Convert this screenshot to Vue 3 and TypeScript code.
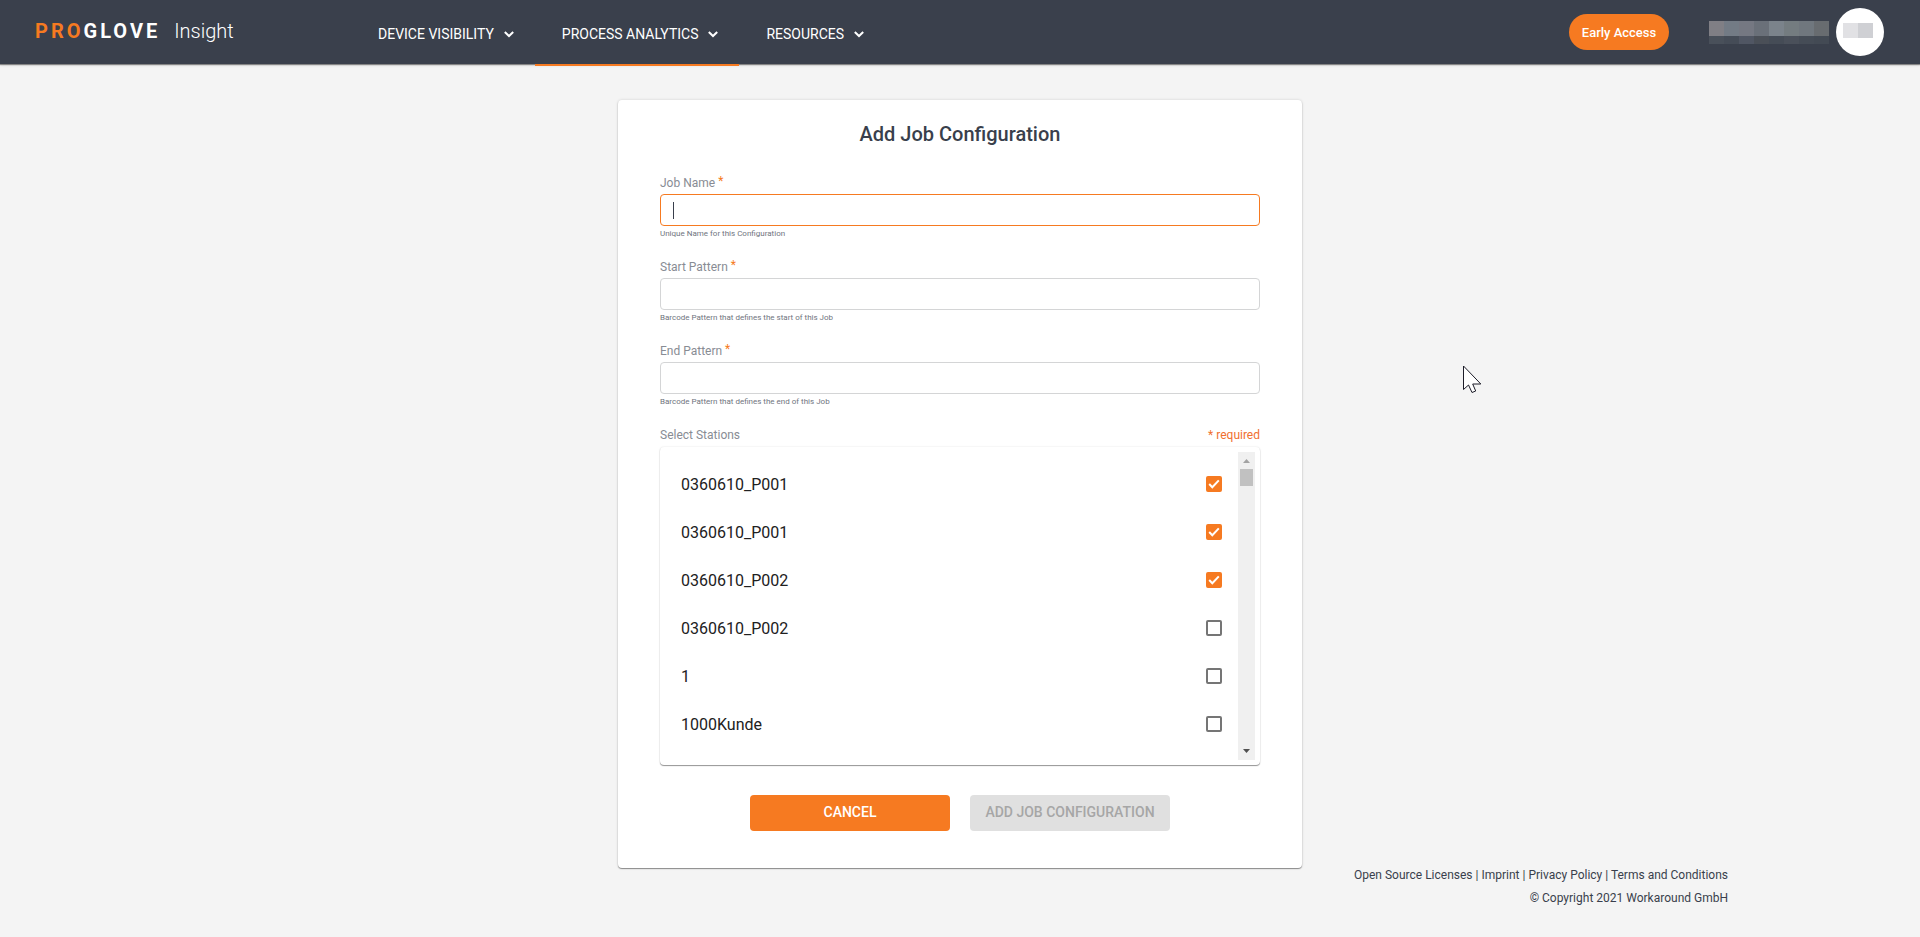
<script setup lang="ts">
import { ref } from 'vue'

interface NavItem { label: string; active: boolean }
interface Field { id: string; label: string; hint: string; value: string; focused: boolean }
interface Station { id: number; name: string; selected: boolean }

const navItems: NavItem[] = [
  { label: 'DEVICE VISIBILITY', active: false },
  { label: 'PROCESS ANALYTICS', active: true },
  { label: 'RESOURCES', active: false },
]

const fields = ref<Field[]>([
  { id: 'job-name', label: 'Job Name', hint: 'Unique Name for this Configuration', value: '', focused: true },
  { id: 'start-pattern', label: 'Start Pattern', hint: 'Barcode Pattern that defines the start of this Job', value: '', focused: false },
  { id: 'end-pattern', label: 'End Pattern', hint: 'Barcode Pattern that defines the end of this Job', value: '', focused: false },
])

const stations = ref<Station[]>([
  { id: 1, name: '0360610_P001', selected: true },
  { id: 2, name: '0360610_P001', selected: true },
  { id: 3, name: '0360610_P002', selected: true },
  { id: 4, name: '0360610_P002', selected: false },
  { id: 5, name: '1', selected: false },
  { id: 6, name: '1000Kunde', selected: false },
])

const footerLinks: string[] = ['Open Source Licenses', 'Imprint', 'Privacy Policy', 'Terms and Conditions']

const maskTop: string[] = ['#807f85', '#737b85', '#757882', '#6a7079', '#7b838b', '#747c80', '#70777e', '#686c70']
const maskBottom: string[] = ['#49505a', '#454c57', '#505663', '#4a4f57', '#454c56', '#4a505a', '#454c56', '#434a54']
</script>

<template>
  <div class="page">
    <header class="topbar">
      <a class="brand" href="#">
        <span class="wordmark"><span class="accent">PRO</span>GLOVE</span>
        <span class="product">Insight</span>
      </a>
      <nav class="nav">
        <button v-for="item in navItems" :key="item.label" type="button" class="nav-item" :class="{ active: item.active }">
          {{ item.label }}
          <svg class="chevron" viewBox="0 0 20 20" aria-hidden="true"><path d="M5.8 8 L10 12 L14.2 8" /></svg>
        </button>
      </nav>
      <div class="account">
        <button type="button" class="early">Early Access</button>
        <div class="mask">
          <span v-for="(c, i) in maskTop" :key="'t' + i" :style="{ background: c }"></span>
          <span v-for="(c, i) in maskBottom" :key="'b' + i" :style="{ background: c }"></span>
        </div>
        <div class="avatar"><span class="tile"></span><span class="tile dark"></span></div>
      </div>
    </header>

    <main class="main">
      <form class="card" @submit.prevent>
        <h1 class="title">Add Job Configuration</h1>
        <div v-for="field in fields" :key="field.id" class="field">
          <label class="label" :for="field.id">{{ field.label }} <span class="star">*</span></label>
          <div class="control">
            <input :id="field.id" v-model="field.value" class="input" :class="{ focused: field.focused }" type="text" />
            <span v-if="field.focused" class="caret"></span>
          </div>
          <p class="hint">{{ field.hint }}</p>
        </div>

        <div class="list-head">
          <span class="label">Select Stations</span>
          <span class="required">* required</span>
        </div>
        <div class="list">
          <ul class="stations">
            <li v-for="s in stations" :key="s.id">
              <label class="station">
                <span>{{ s.name }}</span>
                <span class="check">
                  <input v-model="s.selected" type="checkbox" class="box" />
                  <svg v-if="s.selected" class="tick" viewBox="0 0 16 16" aria-hidden="true"><path d="M3.2 8 L6.3 11.2 L12.8 4.4" /></svg>
                </span>
              </label>
            </li>
          </ul>
          <div class="scrollbar" aria-hidden="true">
            <svg class="arrow up" viewBox="0 0 17 17"><path d="M5 11 L8.5 7 L12 11 Z" /></svg>
            <span class="thumb"></span>
            <svg class="arrow down" viewBox="0 0 17 17"><path d="M5 6 L12 6 L8.5 10 Z" /></svg>
          </div>
        </div>

        <div class="actions">
          <button type="button" class="btn cancel">CANCEL</button>
          <button type="submit" class="btn submit" disabled>ADD JOB CONFIGURATION</button>
        </div>
      </form>
    </main>

    <footer class="footer">
      <div>
        <template v-for="(link, i) in footerLinks" :key="link"><template v-if="i > 0"> | </template><a href="#">{{ link }}</a></template>
      </div>
      <div>© Copyright 2021 Workaround GmbH</div>
    </footer>

    <svg class="pointer" viewBox="0 0 20 28" aria-hidden="true">
      <path d="M0.5 1 L0.5 24.5 L5.5 20 L9 27.5 L12.7 26 L9.7 19 L17.8 19 Z" />
    </svg>
  </div>
</template>

<style>
body {
  margin: 0;
  background: #f4f4f4;
}
</style>

<style scoped>
.page {
  position: relative;
  min-height: 100vh;
  box-sizing: border-box;
  background: #f4f4f4;
  color: #393f4c;
  font-family: Roboto, "Liberation Sans", sans-serif;
}
button,
input {
  font-family: inherit;
}
.topbar {
  display: flex;
  align-items: center;
  height: 64px;
  box-sizing: border-box;
  padding: 0 36px 0 35px;
  background: #3a404c;
  box-shadow: 0 1px 1px rgba(0, 0, 0, 0.4), 0 1px 3px rgba(0, 0, 0, 0.15);
}
.brand {
  display: flex;
  align-items: center;
  gap: 14px;
  width: 316px;
  height: 62px;
  align-self: flex-start;
  color: #fff;
  text-decoration: none;
  font-size: 20px;
}
.wordmark {
  font-weight: 700;
  letter-spacing: 3px;
}
.accent {
  color: #f67a21;
}
.product {
  font-weight: 300;
}
.nav {
  display: flex;
  align-self: stretch;
}
.nav-item {
  position: relative;
  display: flex;
  align-items: center;
  gap: 5px;
  padding: 4px 16px 0 27px;
  border: 0;
  background: none;
  color: #fff;
  font-size: 14px;
  font-weight: 400;
  white-space: nowrap;
}
.nav-item.active::after {
  content: "";
  position: absolute;
  left: 0;
  right: 0;
  bottom: -2px;
  height: 2px;
  background: #f67a21;
}
.chevron {
  width: 20px;
  height: 20px;
  fill: none;
  stroke: #fff;
  stroke-width: 2;
}
.account {
  display: flex;
  align-items: center;
  margin-left: auto;
}
.early {
  width: 100px;
  height: 36px;
  margin-right: 40px;
  padding: 0;
  border: 0;
  border-radius: 18px;
  background: #f67a21;
  color: #fff;
  font-size: 13px;
  font-weight: 500;
}
.mask {
  display: grid;
  grid-template-columns: repeat(8, 15px);
  grid-template-rows: 15px 8px;
  margin-right: 7px;
}
.avatar {
  display: flex;
  align-items: flex-start;
  width: 48px;
  height: 48px;
  box-sizing: border-box;
  padding: 15px 0 0 7px;
  border-radius: 50%;
  background: #fff;
}
.tile {
  width: 15px;
  height: 15px;
  background: #e1e1e4;
}
.tile.dark {
  background: #cfd0d4;
}
.main {
  display: flex;
  justify-content: center;
  padding-top: 36px;
}
.card {
  width: 684px;
  box-sizing: border-box;
  padding: 22px 42px 37px;
  border-radius: 4px;
  background: #fff;
  box-shadow: 0 1px 1px rgba(0, 0, 0, 0.4), 0 0 3px rgba(0, 0, 0, 0.15);
}
.title {
  margin: 0 0 28px;
  font-size: 20px;
  line-height: 24px;
  font-weight: 500;
  text-align: center;
}
.field {
  height: 84px;
}
.label {
  display: block;
  height: 20px;
  line-height: 18px;
  font-size: 12px;
  color: #888c94;
}
.star {
  position: relative;
  top: -2px;
  color: #f67a21;
}
.control {
  position: relative;
}
.input {
  display: block;
  width: 100%;
  height: 32px;
  box-sizing: border-box;
  padding: 0 12px;
  border: 1px solid #d4d5d6;
  border-radius: 4px;
  background: #fff;
  color: #393f4c;
  font-size: 14px;
  outline: none;
}
.input.focused {
  border-color: #f67a21;
}
.caret {
  position: absolute;
  left: 13px;
  top: 8px;
  width: 1px;
  height: 17px;
  background: #393f4c;
}
.hint {
  margin: 2px 0 0;
  font-size: 8px;
  line-height: 12px;
  color: #6f747e;
}
.list-head {
  display: flex;
  justify-content: space-between;
  font-size: 12px;
  line-height: 18px;
}
.required {
  color: #f0702f;
}
.list {
  display: flex;
  box-sizing: border-box;
  margin-top: 1px;
  padding: 5px 5px 5px 0;
  border-radius: 4px;
  box-shadow: 0 1px 1px rgba(0, 0, 0, 0.4), 0 0 2px rgba(0, 0, 0, 0.12);
}
.stations {
  flex: 1;
  margin: 0;
  padding: 8px 16px 12px 21px;
  list-style: none;
}
.station {
  display: flex;
  align-items: center;
  justify-content: space-between;
  height: 48px;
  font-size: 16px;
  color: #212121;
}
.check {
  position: relative;
  width: 16px;
  height: 16px;
}
.box {
  display: block;
  appearance: none;
  width: 16px;
  height: 16px;
  margin: 0;
  border: 2px solid #757575;
  border-radius: 2px;
  background: #fff;
}
.box:checked {
  border-color: #f67a21;
  background: #f67a21;
}
.tick {
  position: absolute;
  left: 0;
  top: 0;
  width: 16px;
  height: 16px;
  fill: none;
  stroke: #fff;
  stroke-width: 2;
  pointer-events: none;
}
.scrollbar {
  display: flex;
  flex-direction: column;
  align-items: center;
  width: 17px;
  background: #f0f0f0;
}
.arrow {
  width: 17px;
  height: 17px;
}
.up {
  fill: #a3a3a3;
}
.down {
  margin-top: auto;
  fill: #505050;
}
.thumb {
  width: 13px;
  height: 17px;
  background: #c1c1c1;
}
.actions {
  display: flex;
  justify-content: center;
  gap: 20px;
  margin-top: 30px;
}
.btn {
  width: 200px;
  height: 36px;
  padding: 0 0 2px;
  border: 0;
  border-radius: 4px;
  font-size: 14px;
  font-weight: 500;
}
.cancel {
  background: #f67a21;
  color: #fff;
}
.submit {
  background: #e0e0e0;
  color: #a6a6a6;
}
.footer {
  display: flex;
  flex-direction: column;
  gap: 9px;
  padding-right: 10%;
  font-size: 12px;
  line-height: 14px;
  text-align: right;
}
.footer a {
  color: inherit;
  text-decoration: none;
}
.pointer {
  position: absolute;
  left: 1463px;
  top: 365px;
  width: 20px;
  height: 28px;
  fill: #fff;
  stroke: #1c1c28;
  stroke-width: 1;
}
</style>
